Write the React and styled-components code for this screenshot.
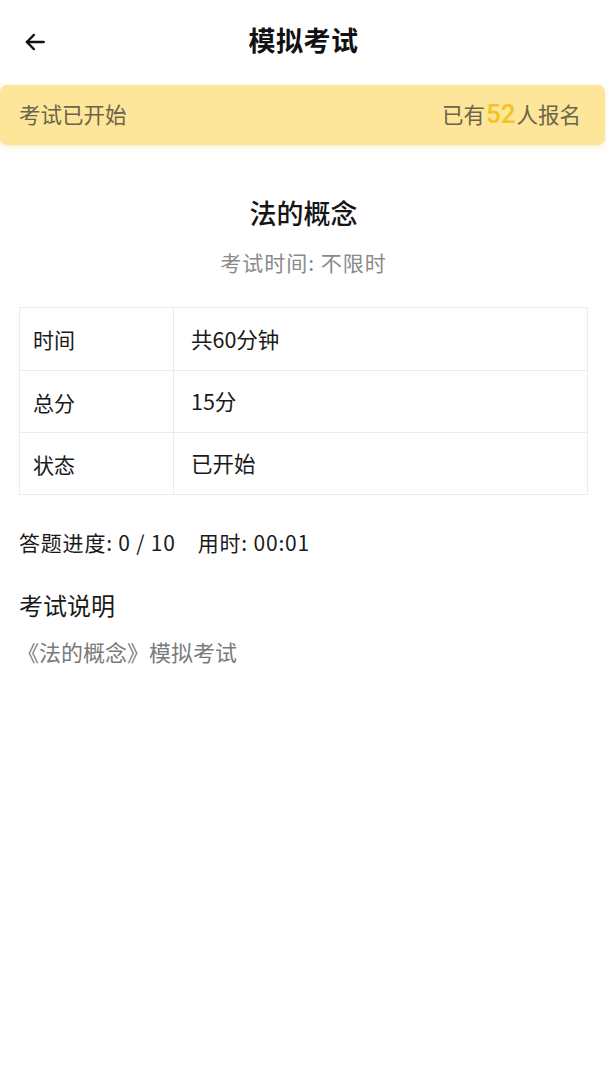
import React from "react";
import styled, { createGlobalStyle } from "styled-components";

const GlobalStyle = createGlobalStyle`
  html, body {
    margin: 0;
    padding: 0;
    background: #ffffff;
  }
  body {
    font-family: "Noto Sans CJK SC", "Noto Sans", sans-serif;
    color: #1a1a1a;
  }
  * {
    box-sizing: border-box;
  }
`;

const rows = [
  { label: "时间", value: "共60分钟" },
  { label: "总分", value: "15分" },
  { label: "状态", value: "已开始" },
];

function BackIcon() {
  return (
    <svg width="26" height="26" viewBox="0 0 24 24" fill="none" stroke="#111" strokeWidth="2.2" strokeLinecap="round" strokeLinejoin="round">
      <path d="M20 12H4.5" />
      <path d="M11 5.5L4.5 12l6.5 6.5" />
    </svg>
  );
}

export default function App() {
  return (
    <>
      <GlobalStyle />
      <Page>
        <TopBar>
          <BackButton aria-label="返回">
            <BackIcon />
          </BackButton>
          <PageTitle>模拟考试</PageTitle>
        </TopBar>

        <Banner>
          <BannerText>考试已开始</BannerText>
          <BannerText>
            已有<Count>52</Count>人报名
          </BannerText>
        </Banner>

        <Content>
          <ExamHead>
            <ExamName>法的概念</ExamName>
            <ExamTime>考试时间: 不限时</ExamTime>
          </ExamHead>

          <InfoTable>
            {rows.map((row, i) => (
              <InfoRow key={row.label} first={i === 0}>
                <InfoLabel>{row.label}</InfoLabel>
                <InfoValue>{row.value}</InfoValue>
              </InfoRow>
            ))}
          </InfoTable>

          <Progress>
            <span>答题进度: 0 / 10</span>
            <span>用时: 00:01</span>
          </Progress>

          <SectionTitle>考试说明</SectionTitle>
          <SectionText>《法的概念》模拟考试</SectionText>
        </Content>
      </Page>
    </>
  );
}

const Page = styled.div`
  width: 100%;
  min-height: 1080px;
  background: #fff;
`;

const TopBar = styled.header`
  position: relative;
  height: 84px;
  padding-bottom: 6px;
  display: flex;
  align-items: center;
  justify-content: center;
`;

const BackButton = styled.button`
  position: absolute;
  left: 20px;
  top: 28px;
  width: 30px;
  height: 28px;
  padding: 0;
  border: 0;
  background: transparent;
  display: flex;
  align-items: center;
  justify-content: center;
`;

const PageTitle = styled.h1`
  margin: 0;
  font-size: 27px;
  font-weight: 700;
  color: #111;
  letter-spacing: 0.5px;
`;

const Banner = styled.div`
  height: 60px;
  margin: 1px 2px 0 0;
  padding: 0 24px 3px 19px;
  display: flex;
  align-items: center;
  justify-content: space-between;
  background: #fde59a;
  border-radius: 7px;
  box-shadow: 0 2px 6px rgba(240, 205, 110, 0.35);
`;

const BannerText = styled.span`
  font-size: 21.5px;
  color: #6a6448;
  display: flex;
  align-items: baseline;
`;

const Count = styled.b`
  font-family: Roboto, "Noto Sans CJK SC", sans-serif;
  font-size: 26px;
  font-weight: 500;
  color: #f5c21f;
  margin: 0 1px;
`;

const Content = styled.main`
  padding: 0 19px;
`;

const ExamHead = styled.div`
  padding-top: 48px;
  display: flex;
  flex-direction: column;
  align-items: center;
`;

const ExamName = styled.h2`
  margin: 0;
  font-size: 27px;
  font-weight: 500;
  color: #151515;
  line-height: 40px;
`;

const ExamTime = styled.p`
  margin: 14px 0 0;
  font-size: 21px;
  letter-spacing: 1px;
  color: #8a8a8a;
  line-height: 30px;
`;

const InfoTable = styled.div`
  margin-top: 30px;
  border: 1px solid #ececec;
`;

const InfoRow = styled.div`
  display: grid;
  grid-template-columns: 154px 1fr;
  height: 62px;
  padding-bottom: 2px;
  border-top: ${(p) => (p.first ? "none" : "1px solid #ececec")};
`;

const InfoLabel = styled.div`
  display: flex;
  align-items: center;
  padding-left: 13px;
  font-size: 21px;
  color: #1a1a1a;
  border-right: 1px solid #ececec;
  margin-bottom: -2px;
`;

const InfoValue = styled.div`
  display: flex;
  align-items: center;
  padding-left: 17px;
  font-size: 21.5px;
  color: #1a1a1a;
`;

const Progress = styled.div`
  margin-top: 32px;
  display: flex;
  gap: 22px;
  font-size: 21px;
  letter-spacing: 0.8px;
  color: #1a1a1a;
  line-height: 30px;
`;

const SectionTitle = styled.h3`
  margin: 31px 0 0;
  font-size: 24px;
  font-weight: 400;
  color: #1a1a1a;
  line-height: 34px;
`;

const SectionText = styled.p`
  margin: 14px 0 0;
  font-size: 22px;
  color: #7a7a7a;
  line-height: 30px;
  margin-left: -2px;
`;
